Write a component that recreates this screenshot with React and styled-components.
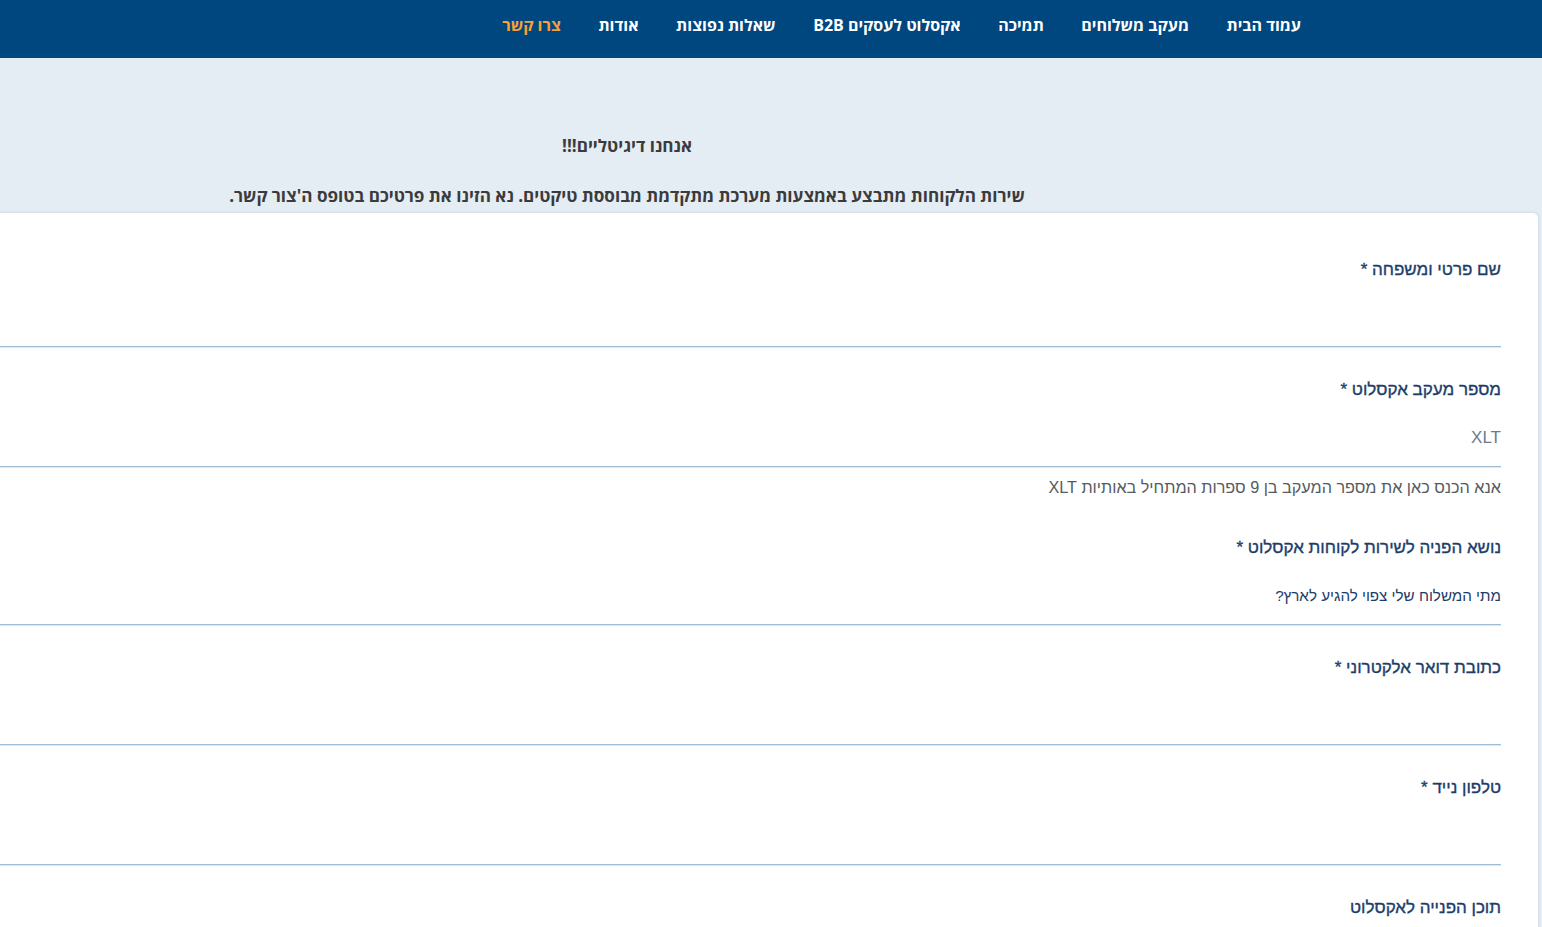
import React from "react";
import styled, { createGlobalStyle } from "styled-components";

const Global = createGlobalStyle`
  html, body { margin: 0; padding: 0; }
  body {
    background: #e4ecf4;
    font-family: "Open Sans", "DejaVu Sans", sans-serif;
    direction: rtl;
    overflow: hidden;
  }
`;

const Nav = styled.nav`
  height: 58px;
  background: #00467f;
  display: flex;
  align-items: center;
  padding-right: 241px;
  gap: 37.5px;
  padding-bottom: 8px;
  box-sizing: border-box;
`;

const NavLink = styled.a`
  color: ${(p) => (p.$active ? "#f7a03a" : "#ffffff")};
  font-weight: 700;
  font-size: 16px;
  text-decoration: none;
  white-space: nowrap;
`;

const Hero = styled.section`
  height: 155px;
  width: 1254px;
  margin-left: 0;
  margin-right: auto;
  display: flex;
  flex-direction: column;
  align-items: center;
  color: #3b3b3b;
  font-weight: 700;
  font-size: 17.1px;
  box-sizing: border-box;
  padding-top: 77px;
`;

const HeroTitle = styled.div`
  line-height: 22px;
`;

const HeroText = styled.div`
  line-height: 22px;
  margin-top: 28px;
`;

const Card = styled.main`
  background: #ffffff;
  margin-right: 4px;
  margin-left: -10px;
  border-top-right-radius: 5px;
  box-shadow: 0 0 3px rgba(120, 150, 180, 0.35);
  padding: 14px 37px 0 0;
  min-height: 800px;
  font-family: "Liberation Sans", Arial, sans-serif;
`;

const Field = styled.div`
  padding-top: 31px;
`;

const Label = styled.label`
  display: block;
  color: #1b3d6a;
  font-size: 17px;
  line-height: 24px;
  font-weight: 400;
  -webkit-text-stroke: 0.35px #1b3d6a;
`;

const InputArea = styled.div`
  height: 65px;
  display: flex;
  align-items: flex-start;
  padding-top: 25px;
  box-sizing: border-box;
  border-bottom: 1px solid #9dbcd6;
  box-shadow: 0 1px 0 #e1e9f0;
  color: ${(p) => (p.$placeholder ? "#6b7c8d" : "#1b3d6a")};
  font-size: ${(p) => (p.$placeholder ? "17px" : "15.2px")};
  line-height: 22px;
`;

const Help = styled.div`
  color: #555b61;
  font-size: 16.2px;
  line-height: 22px;
  margin-top: 9px;
  margin-bottom: 7px;
`;

const navItems = [
  "עמוד הבית",
  "מעקב משלוחים",
  "תמיכה",
  "אקסלוט לעסקים B2B",
  "שאלות נפוצות",
  "אודות",
];

export default function App() {
  return (
    <>
      <Global />
      <Nav>
        {navItems.map((t) => (
          <NavLink key={t} href="#">
            {t}
          </NavLink>
        ))}
        <NavLink href="#" $active>
          צרו קשר
        </NavLink>
      </Nav>
      <Hero>
        <HeroTitle>אנחנו דיגיטליים!!!</HeroTitle>
        <HeroText>
          שירות הלקוחות מתבצע באמצעות מערכת מתקדמת מבוססת טיקטים. נא הזינו את
          פרטיכם בטופס ה'צור קשר.
        </HeroText>
      </Hero>
      <Card>
        <Field>
          <Label>שם פרטי ומשפחה *</Label>
          <InputArea />
        </Field>
        <Field>
          <Label>מספר מעקב אקסלוט *</Label>
          <InputArea $placeholder>XLT</InputArea>
          <Help>אנא הכנס כאן את מספר המעקב בן 9 ספרות המתחיל באותיות XLT</Help>
        </Field>
        <Field>
          <Label>נושא הפניה לשירות לקוחות אקסלוט *</Label>
          <InputArea>מתי המשלוח שלי צפוי להגיע לארץ?</InputArea>
        </Field>
        <Field>
          <Label>כתובת דואר אלקטרוני *</Label>
          <InputArea />
        </Field>
        <Field>
          <Label>טלפון נייד *</Label>
          <InputArea />
        </Field>
        <Field>
          <Label>תוכן הפנייה לאקסלוט</Label>
        </Field>
      </Card>
    </>
  );
}
